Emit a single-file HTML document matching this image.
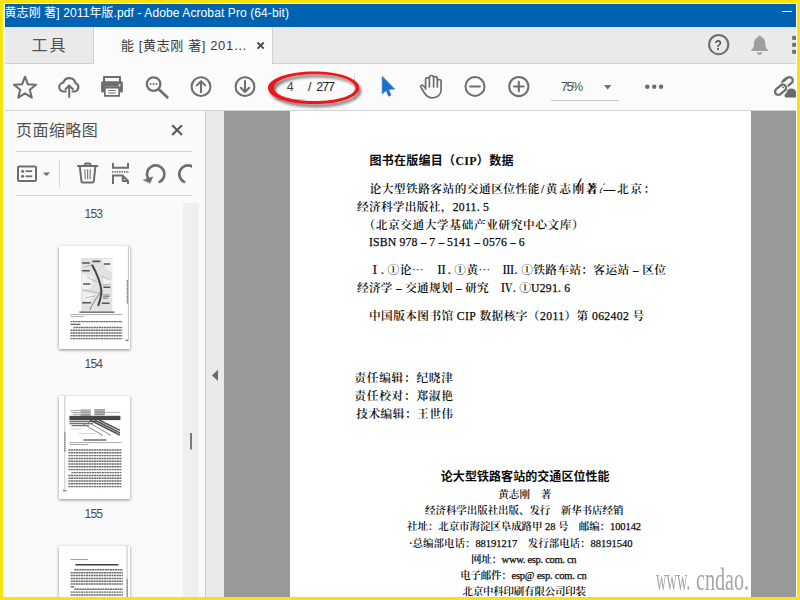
<!DOCTYPE html>
<html lang="zh-CN">
<head>
<meta charset="utf-8">
<title>Adobe Acrobat Pro</title>
<style>
*{box-sizing:border-box}
html,body{margin:0;padding:0}
body{width:800px;height:600px;overflow:hidden;background:#f8e310;position:relative;font-family:"Liberation Sans","Noto Sans CJK SC",sans-serif;color:#4b4b4b}
.abs,.app *{position:absolute}
.frame{position:absolute;left:3px;top:3px;width:794px;height:594px;background:#fff}
.app{position:absolute;left:5px;top:4px;width:791px;height:593px;background:#fafafa;overflow:hidden}
.title{left:0;top:0;width:791px;height:23px;background:#0063b1;color:#fff;font-size:12px;line-height:16px;white-space:pre}
.min{left:777px;top:7px;width:10px;height:1px;background:#fff}
.tabs{left:0;top:23px;width:791px;height:37px;background:#eaeaea;border-bottom:1px solid #d2d2d2}
.tab1{left:0;top:0;width:89px;height:37px;border-right:1px solid #cfcfcf;border-bottom:1px solid #cfcfcf;background:#eaeaea}
.tab2{left:89px;top:0;width:179px;height:37px;background:#fbfbfb;border-right:1px solid #d2d2d2}
.tool{left:0;top:60px;width:791px;height:47px;background:#fbfbfb;border-bottom:1px solid #d4d4d4}
.lp{left:0;top:107px;width:201px;height:486px;background:#fafafa;border-right:1px solid #cdcdcd;overflow:hidden}
.split{left:201px;top:107px;width:18px;height:486px;background:#eaeaea}
.doc{left:219px;top:107px;width:572px;height:486px;background:#999}
.page{left:66px;top:0;width:461px;height:486px;background:#fff}
svg{position:absolute;overflow:visible}
.ln{position:absolute;white-space:pre;line-height:20px;height:20px;color:#0a0a0a}
.ln.s{font-family:"Liberation Serif","Noto Serif CJK SC",serif;font-weight:600}
.ln.s .l{font-weight:400;position:static;-webkit-text-stroke:0.25px currentColor}
.wm{position:absolute;top:562.5px;font:400 30.5px/34px "Liberation Serif",serif;color:#a6a6a6;white-space:pre;transform-origin:0 0}
.ln b{font-weight:900;position:static}
.ln i{font-style:normal;font-family:"Noto Serif CJK SC",serif;position:static;line-height:0}
.ln.h{font-family:"Liberation Serif","Noto Sans CJK SC",sans-serif;font-weight:700}
.ln.n{font-family:"Liberation Sans","Noto Sans CJK SC",sans-serif;font-weight:400}
.ln.b{font-family:"Liberation Sans","Noto Sans CJK SC",sans-serif;font-weight:700}
#ptext{position:absolute;left:0;top:0;width:796px;height:597px;overflow:hidden}
#ov{position:absolute;left:0;top:0;width:796px;height:597px;overflow:hidden}
#thumbs{position:absolute;left:0;top:0;width:206px;height:597px;overflow:hidden}
#thumbs *{position:absolute}
.track{left:183px;top:203px;width:16px;height:394px;background:#efefef}
.thumb{left:58.6px;width:71px;height:103px;background:#fff;box-shadow:0 1px 3px rgba(0,0,0,.45);overflow:hidden}
</style>
</head>
<body>
<div class="frame"></div>
<div class="app">
  <div class="title"><div class="min"></div></div>
  <div class="tabs">
    <div class="tab1"></div>
    <div class="tab2"></div>
  </div>
  <div class="tool"></div>
  <div class="lp"></div>
  <div class="split"></div>
  <div class="doc"><div class="page"></div></div>
</div>
<div id="thumbs">
  <div class="track"></div>
<div class="thumb" style="top:246px"><svg width="71" height="103" viewBox="0 0 71 103" style="left:0;top:0" fill="none"><rect x="22.2" y="12" width="31.2" height="52.9" fill="#e2e2e2"/><path d="M43 13 L53 13 L53 26 L47 22 Z M23 28 L34 30 L32 42 L23 44 Z M44 30 L53 33 L53 39 L45 38 Z M24 46 L36 48 L30 56 L24 54 Z" fill="#f1f1f1"/><path d="M25 21 L33 19 M28 31 L38 36 M24 44 L40 47 M42 30 L52 34 M43 39 L52 38 M26 52 L36 50" stroke="#a4a4a4" stroke-width="0.7"/><path d="M42.4 44 C38 52 33 58 30.8 64" stroke="#7a7a7a" stroke-width="0.9"/><path d="M33 18.7 C36 24 41 34 42.4 44.5 C42.6 50 40.5 56 39.1 59.9" stroke="#454545" stroke-width="2"/><path d="M23.1 17 H30.8 M33.4 15.4 H41.3 M44.9 18 H51.2 M23.1 24.7 H30.8 M24.2 38 H31.4 M44.4 41.2 H51.2 M42.9 57.2 H50.6 M23.1 56.8 H31.9" stroke="#555" stroke-width="1.6"/><path d="M44 49 H50.6 M44 50.6 H50.6 M44 52.2 H49" stroke="#777" stroke-width="0.9"/><path d="M69.4 0 V93" stroke="#b4b4b4" stroke-width="0.8"/><path d="M68.3 34 V58" stroke="#6a6a6a" stroke-width="1.1" stroke-dasharray="1.4 0.6"/><path d="M20.4 66.2 H55.4" stroke="#4a4a4a" stroke-width="1.2"/><path d="M11.4 68.6 H63.4 M11.4 70.6 H25.4" stroke="#a0a0a0" stroke-width="0.9"/><path d="M11.4 75.6 H63.4" stroke="#6c6c6c" stroke-width="1.45" stroke-dasharray="2.1 0.45"/><path d="M11.4 78.4 H21.4" stroke="#6c6c6c" stroke-width="1.45"/><path d="M14.4 81.4 H63.4 M11.4 84.2 H63.4 M11.4 87.0 H63.4 M11.4 89.8 H63.4 M11.4 92.6 H63.4" stroke="#6c6c6c" stroke-width="1.45" stroke-dasharray="2.1 0.45"/><rect x="66.6" y="93.6" width="3" height="1.6" fill="#888"/></svg></div>
<div class="thumb" style="top:396px"><svg width="71" height="103" viewBox="0 0 71 103" style="left:0;top:0" fill="none"><path d="M11.5 14.6 H21 M12.5 16.5 H21 M14 18.3 H21" stroke="#a6a6a6" stroke-width="1"/><rect x="21.4" y="13.4" width="10.3" height="6.4" fill="#9c9c9c"/><rect x="35.4" y="13.2" width="10.5" height="6" fill="#8c8c8c"/><path d="M21.4 15 H31.7 M21.4 17.4 H31.7 M35.4 14.8 H45.9 M35.4 17.2 H45.9" stroke="#d8d8d8" stroke-width="0.7"/><path d="M46 16.4 H61" stroke="#9a9a9a" stroke-width="0.7"/><path d="M10.4 25.5 H37 M10.4 27.6 H34 M12.5 29.6 H30" stroke="#707070" stroke-width="1.3"/><path d="M31 24 L60.8 39 M35.5 24 L61 36.8 M40 24 L61 34.4" stroke="#505050" stroke-width="1.4"/><path d="M27 25 L52 39.4 M23.5 27.4 L44 39.6" stroke="#8a8a8a" stroke-width="1"/><path d="M12 33 H22 M20 37.6 H36" stroke="#bdbdbd" stroke-width="0.7"/><rect x="10.4" y="19.8" width="51" height="4.3" fill="#484848"/><path d="M5.8 0 V93" stroke="#b4b4b4" stroke-width="0.8"/><path d="M5.9 36 V56" stroke="#6a6a6a" stroke-width="1.1" stroke-dasharray="1.4 0.6"/><path d="M24.4 44 H47.4" stroke="#4a4a4a" stroke-width="1.2"/><path d="M10.4 46.6 H62.4 M10.4 48.5 H29.4" stroke="#a0a0a0" stroke-width="0.9"/><path d="M9.4 54.0 H62.4 M9.4 56.8 H62.4 M9.4 59.6 H62.4 M9.4 62.4 H62.4 M9.4 65.2 H62.4 M9.4 68.0 H62.4 M9.4 70.8 H62.4 M9.4 73.6 H62.4" stroke="#6c6c6c" stroke-width="1.45" stroke-dasharray="2.1 0.45"/><path d="M12.4 76.6 H62.4 M9.4 79.4 H62.4 M9.4 82.2 H62.4 M9.4 85.0 H62.4 M9.4 87.8 H62.4 M9.4 90.6 H62.4" stroke="#6c6c6c" stroke-width="1.45" stroke-dasharray="2.1 0.45"/><rect x="4" y="93.8" width="3.4" height="1.6" fill="#888"/></svg></div>
<div class="thumb" style="top:546px"><svg width="71" height="103" viewBox="0 0 71 103" style="left:0;top:0" fill="none"><path d="M68.1 0 V60" stroke="#b4b4b4" stroke-width="0.8"/><path d="M68.2 33 V60" stroke="#6a6a6a" stroke-width="1.1" stroke-dasharray="1.4 0.6"/><path d="M11.4 13.6 H29" stroke="#9a9a9a" stroke-width="1"/><path d="M16.4 18.8 H59.4" stroke="#3e3e3e" stroke-width="1.5"/><path d="M15.2 23.8 H63.9 M11.7 26.7 H63.9 M11.7 29.5 H63.9 M11.7 32.4 H63.9 M11.7 35.2 H63.9 M11.7 38.0 H63.9" stroke="#6c6c6c" stroke-width="1.45" stroke-dasharray="2.1 0.45"/><path d="M11.7 40.9 H15.2" stroke="#6c6c6c" stroke-width="1.45"/><path d="M15.2 43.2 H63.9 M11.7 46.1 H63.9 M11.7 48.9 H63.9" stroke="#6c6c6c" stroke-width="1.45" stroke-dasharray="2.1 0.45"/></svg></div>
</div>

<div id="ov"><svg id="ico" width="800" height="600" viewBox="0 0 800 600" style="left:0;top:0;position:absolute" fill="none" stroke="#6e6e6e" stroke-width="2.05" stroke-linecap="round" stroke-linejoin="round">
  <!-- star -->
  <polygon points="25.0,76.7 27.9,84.3 36.0,84.7 29.8,89.8 31.8,97.7 25.0,93.3 18.2,97.7 20.2,89.8 14.0,84.7 22.1,84.3"/>
  <!-- cloud upload -->
  <path d="M65.8 91.5 H63.8 A4.4 4.4 0 0 1 63.4 82.7 A6.2 6.2 0 0 1 75.4 83 A4.4 4.4 0 0 1 74.6 91.5 H72.6" stroke-width="2.2"/>
  <path d="M69.2 97 V85.4 M65.5 89.2 L69.2 85.4 L72.9 89.2" stroke-width="2"/>
  <!-- printer -->
  <g stroke="none" fill="#6e6e6e">
    <path d="M104 76 h16 a1 1 0 0 1 1 1 v5 h-2 v-4 h-14 v4 h-2 v-5 a1 1 0 0 1 1-1z"/>
    <path d="M102.7 81.3 h18.6 a1.6 1.6 0 0 1 1.6 1.6 v8 a1.6 1.6 0 0 1-1.6 1.6 h-1.3 v-5.7 h-16 v5.7 h-1.3 a1.6 1.6 0 0 1-1.6-1.6 v-8 a1.6 1.6 0 0 1 1.6-1.6z M119.6 84.2 a0.9 0.9 0 1 0 0.01 0z" fill-rule="evenodd"/>
    <path d="M104 86.8 h16 v9.9 h-16z M105.7 88.5 v6.5 h12.6 v-6.5z M108.4 90 h7.2 v0.9 h-7.2z M108.4 92.5 h7.2 v0.9 h-7.2z" fill-rule="evenodd"/>
  </g>
  <!-- search -->
  <circle cx="153.6" cy="84.1" r="6.8" stroke-width="2.3"/>
  <path d="M159 89.6 L167.3 97.3" stroke-width="2.7"/>
  <g stroke="none" fill="#6e6e6e"><circle cx="150.6" cy="84" r="0.95"/><circle cx="153.6" cy="84" r="0.95"/><circle cx="156.6" cy="84" r="0.95"/></g>
  <!-- up -->
  <circle cx="201" cy="86.7" r="9.4"/>
  <path d="M201 92.2 V81.2 M196.8 85.4 L201 81.2 L205.2 85.4"/>
  <!-- down -->
  <circle cx="245" cy="86.7" r="9.4"/>
  <path d="M245 81 V92 M240.8 87.8 L245 92 L249.2 87.8"/>
  <!-- separator -->
  <path d="M354.5 74 V100" stroke="#d9d9d9" stroke-width="1" stroke-linecap="butt"/>
  <!-- page number underline -->
  <path d="M276 99.5 H305" stroke="#c9c9c9" stroke-width="1" stroke-linecap="butt"/>
  <!-- red ellipse -->
  <defs><filter id="sh" x="-20%" y="-40%" width="140%" height="190%"><feGaussianBlur in="SourceAlpha" stdDeviation="1.7"/><feOffset dx="2.4" dy="2.6" result="o"/><feComponentTransfer><feFuncA type="linear" slope="0.55"/></feComponentTransfer><feMerge><feMergeNode/><feMergeNode in="SourceGraphic"/></feMerge></filter></defs>
  <path filter="url(#sh)" fill="#ee1219" stroke="none" fill-rule="evenodd" d="M268 88 C268 79 288 71.6 314 71.6 C340 71.6 359.3 79 359.3 88 C359.3 97 340 104.2 314 104.2 C288 104.2 268 97 268 88Z M273.8 87.8 C273.8 95.4 291 101.1 314.7 101.1 C338.4 101.1 355.6 95.4 355.6 87.8 C355.6 80.2 338.4 74.3 314.7 74.3 C291 74.3 273.8 80.2 273.8 87.8Z"/>
  <!-- pen scribble on page -->
  <path d="M577.4 187 C578.4 184 579.6 181.4 581 179" stroke="#111" stroke-width="1.3"/>
  <path d="M600.4 190.6 l1.6-2.6 M603.6 184.6 l1-0.8" stroke="#222" stroke-width="1"/>
  <!-- cursor -->
  <path d="M382.2 76.4 V94 L386.2 90.4 L388.6 96.2 L391 95.2 L388.7 89.5 L394.4 89 Z" fill="#1f6fcc" stroke="#1f6fcc" stroke-width="0.6"/>
  <!-- hand -->
  <path d="M425.6 89.2 V79.6 a1.9 1.9 0 0 1 3.8 0 V87 M429.4 79.6 V77.6 a2.1 2.1 0 0 1 4.2 0 V87 M433.6 78.4 a1.85 1.85 0 0 1 3.7 0 V87 M437.3 81.4 a1.9 1.9 0 0 1 3.8 0 V89.5 c0 5.2-3.6 8.4-8.6 8.4 c-4 0-6.4-2-8.4-5.4 l-3.3-5.2 c-.9-1.5 1-3 2.3-1.8 l2.5 2.7" stroke-width="1.7"/>
  <!-- minus -->
  <circle cx="475" cy="86.4" r="9.5"/>
  <path d="M470.2 86.4 H479.8"/>
  <!-- plus -->
  <circle cx="518.8" cy="86.5" r="9.6"/>
  <path d="M514 86.5 H523.6 M518.8 81.7 V91.3"/>
  <!-- zoom underline + triangle -->
  <path d="M551 100.5 H619" stroke="#c9c9c9" stroke-width="1" stroke-linecap="butt"/>
  <path d="M604 85 h7.4 l-3.7 4.4z" fill="#6e6e6e" stroke="none"/>
  <!-- dots -->
  <g stroke="none" fill="#6e6e6e"><circle cx="647.3" cy="86.8" r="2.2"/><circle cx="654.2" cy="86.8" r="2.2"/><circle cx="661.1" cy="86.8" r="2.2"/></g>
  <!-- link -->
  <g stroke-width="2.3">
    <g transform="translate(787.2 82.3) rotate(-40)"><rect x="-6.25" y="-3.25" width="12.5" height="6.5" rx="3.25"/></g>
    <g transform="translate(780.6 89.7) rotate(-40)"><rect x="-6.25" y="-3.25" width="12.5" height="6.5" rx="3.25" stroke="#fbfbfb" stroke-width="4"/><rect x="-6.25" y="-3.25" width="12.5" height="6.5" rx="3.25"/></g>
    <path d="M783.3 80.6 L786.6 77.9" />
  </g>
  <path d="M785.6 97.6 a2.6 2.6 0 0 1 0.8-4.6 a5 5 0 0 1 9.6-1.4 V97.6z" fill="#6a6a6a" stroke="#fbfbfb" stroke-width="1.2" paint-order="stroke"/>
  <!-- help -->
  <circle cx="718.7" cy="44.6" r="9.6"/>
  <!-- bell -->
  <g stroke="none" fill="#9e9e9e">
    <path d="M759.6 35.4 a1.4 1.4 0 0 1 1.4 1.5 c3 0.9 4.2 3.6 4.2 6.6 c0 3.6 1 5.2 2.8 6.6 v0.9 h-16.8 v-0.9 c1.8-1.4 2.8-3 2.8-6.6 c0-3 1.2-5.7 4.2-6.6 a1.4 1.4 0 0 1 1.4-1.5z"/>
    <path d="M757 52.4 h5.2 a2.6 2.3 0 0 1-5.2 0z"/>
  </g>
  <!-- grid squares -->
  <g stroke="none" fill="#6e6e6e"><rect x="792.2" y="35.9" width="4" height="4"/><rect x="792.2" y="42.8" width="4" height="4"/><rect x="792.2" y="49.8" width="4" height="4"/></g>
  <!-- tab close x -->
  <path d="M257.5 42.5 l6.2 6.2 M263.7 42.5 l-6.2 6.2" stroke="#4a4a4a" stroke-width="1.9" stroke-linecap="butt"/>

  <!-- LEFT PANEL -->
  <path d="M172.2 125.2 L182 135 M182 125.2 L172.2 135" stroke="#555" stroke-width="2" stroke-linecap="butt"/>
  <path d="M16 151.5 H192 M16 195.5 H192" stroke="#d3d3d3" stroke-width="1" stroke-linecap="butt"/>
  <path d="M59.5 159.5 V187" stroke="#d3d3d3" stroke-width="1" stroke-linecap="butt"/>
  <!-- options -->
  <rect x="18" y="166.4" width="18" height="14.6" rx="1.2" stroke-width="2"/>
  <g stroke="none" fill="#6e6e6e"><circle cx="22.6" cy="171.2" r="1.5"/><circle cx="22.6" cy="176.3" r="1.5"/><rect x="25.6" y="170.3" width="6.6" height="1.8"/><rect x="25.6" y="175.4" width="6.6" height="1.8"/></g>
  <path d="M43 172.4 h7 l-3.5 3.6z" fill="#6e6e6e" stroke="none"/>
  <!-- trash -->
  <path d="M77.9 165.9 H97.3 M84.9 165.4 V164.6 a1 1 0 0 1 1-1 h3.6 a1 1 0 0 1 1 1 V165.4" stroke-width="2"/>
  <path d="M79.8 166.4 l1.6 14.8 a1.5 1.5 0 0 0 1.5 1.3 h9.4 a1.5 1.5 0 0 0 1.5-1.3 l1.6-14.8" stroke-width="2"/>
  <path d="M84.9 169.3 l0.3 10 M87.6 169.3 v10 M90.3 169.3 l-0.3 10" stroke-width="1.2" stroke="#808080" stroke-linecap="butt"/>
  <!-- cut page -->
  <path d="M113 163 v4.7 h15 v-4.7" stroke-width="2" stroke-linecap="butt" stroke-linejoin="miter"/>
  <path d="M112 171.9 H129.2" stroke-width="1.8" stroke-dasharray="1.35 1.05" stroke-linecap="butt"/>
  <path d="M113 183.9 V175.6 H122.6 L128 181 V183.9 M122.8 176 V180.9 H127.6" stroke-width="2" stroke-linecap="butt" stroke-linejoin="miter"/>
  <!-- rotate ccw -->
  <path d="M147.95 178.05 A8.7 8.7 0 1 1 159.65 181.85" stroke-width="2.7"/>
  <path d="M143.8 180 L152.7 176.8 L150.1 183z" fill="#6e6e6e" stroke="#6e6e6e" stroke-width="0.6"/>
  <!-- rotate cw (clipped) -->
  <clipPath id="cp"><rect x="170" y="155" width="22" height="35"/></clipPath>
  <g clip-path="url(#cp)"><path d="M195.75 178.05 A8.7 8.7 0 1 0 184.05 181.85" stroke-width="2.7"/></g>
  <!-- splitter arrow -->
  <path d="M218 369.8 v11.2 l-6-5.6z" fill="#6a6a6a" stroke="none"/>
  <!-- scrollbar grip -->
  <path d="M191 433 V449.6" stroke="#787878" stroke-width="2" stroke-linecap="butt"/>
</svg>
</div>
<!-- page text, in absolute body coordinates -->
<div id="ptext">
<div class="ln h" style="left:369.5px;top:151.4px;font-size:12px;letter-spacing:0.27px;color:#0a0a0a;">图书在版编目（CIP）数据</div>
<div class="ln s" style="left:369.5px;top:179.6px;font-size:11.7px;letter-spacing:0.48px;color:#0a0a0a;">论大型铁路客站的交通区位性能</div>
<div class="ln s" style="left:541.0px;top:179.6px;font-size:11.7px;letter-spacing:1.61px;color:#0a0a0a;">/黄志刚<b>著</b><span class="l">.</span>—北京：</div>
<div class="ln s" style="left:357.0px;top:197.5px;font-size:11.7px;letter-spacing:0.27px;color:#0a0a0a;">经济科学出版社，<span class="l">2011. 5</span></div>
<div class="ln s" style="left:363.5px;top:215.9px;font-size:11.7px;letter-spacing:0.58px;color:#0a0a0a;">（北京交通大学基础产业研究中心文库）</div>
<div class="ln s" style="left:369.0px;top:232.9px;font-size:11.7px;letter-spacing:0.19px;color:#0a0a0a;"><span class="l">ISBN 978</span> – <span class="l">7</span> – <span class="l">5141</span> – <span class="l">0576</span> – <span class="l">6</span></div>
<div class="ln s" style="left:369.0px;top:260.9px;font-size:11.7px;letter-spacing:0.35px;color:#0a0a0a;">Ⅰ<span class="l">.</span> ①论<i>…</i>　Ⅱ<span class="l">.</span> ①黄<i>…</i>　Ⅲ<span class="l">.</span> ①铁路车站：客运站 – 区位</div>
<div class="ln s" style="left:357.0px;top:278.6px;font-size:11.7px;letter-spacing:0.23px;color:#0a0a0a;">经济学 – 交通规划 – 研究　Ⅳ<span class="l">.</span> ①<span class="l">U291. 6</span></div>
<div class="ln s" style="left:369.0px;top:306.6px;font-size:11.7px;letter-spacing:0.39px;color:#0a0a0a;">中国版本图书馆 <span class="l">CIP</span> 数据核字（<span class="l">2011</span>）第 <span class="l">062402</span> 号</div>
<div class="ln s" style="left:354.3px;top:369.4px;font-size:11.7px;letter-spacing:0.74px;color:#0a0a0a;">责任编辑：纪晓津</div>
<div class="ln s" style="left:354.3px;top:387.1px;font-size:11.7px;letter-spacing:0.74px;color:#0a0a0a;">责任校对：郑淑艳</div>
<div class="ln s" style="left:356.3px;top:405.2px;font-size:11.7px;letter-spacing:0.46px;color:#0a0a0a;">技术编辑：王世伟</div>
<div class="ln b" style="left:440.8px;top:466.8px;font-size:12px;letter-spacing:0.06px;color:#0a0a0a;">论大型铁路客站的交通区位性能</div>
<div class="ln s" style="left:498.2px;top:484.8px;font-size:10.5px;letter-spacing:0.12px;color:#0a0a0a;">黄志刚　著</div>
<div class="ln s" style="left:425.0px;top:500.8px;font-size:10.5px;letter-spacing:-0.06px;color:#0a0a0a;">经济科学出版社出版、发行　新华书店经销</div>
<div class="ln s" style="left:407.0px;top:517.2px;font-size:10.5px;letter-spacing:-0.08px;color:#0a0a0a;">社址：北京市海淀区阜成路甲 <span class="l">28</span> 号　邮编：<span class="l">100142</span></div>
<div class="ln s" style="left:409.0px;top:533.5px;font-size:10.5px;letter-spacing:-0.02px;color:#0a0a0a;">·总编部电话：<span class="l">88191217</span>　发行部电话：<span class="l">88191540</span></div>
<div class="ln s" style="left:471.0px;top:549.8px;font-size:10.5px;letter-spacing:-0.30px;color:#0a0a0a;">网址：<span class="l">www. esp. com. cn</span></div>
<div class="ln s" style="left:460.2px;top:566.2px;font-size:10.5px;letter-spacing:-0.23px;color:#0a0a0a;">电子邮件：<span class="l">esp@ esp. com. cn</span></div>
<div class="ln s" style="left:462.5px;top:582.0px;font-size:10.5px;letter-spacing:-0.23px;color:#0a0a0a;">北京中科印刷有限公司印装</div>
<div class="ln n" style="left:4.5px;top:3.3px;font-size:12px;letter-spacing:0.10px;color:#fff;">黄志刚 著] 2011年版.pdf - Adobe Acrobat Pro (64-bit)</div>
<div class="ln n" style="left:31.5px;top:35.5px;font-size:16px;letter-spacing:2.10px;color:#505050;">工具</div>
<div class="ln n" style="left:121.0px;top:36.0px;font-size:13px;letter-spacing:0.62px;color:#3a3a3a;">能 [黄志刚 著] 201…</div>
<div class="ln n" style="left:286.8px;top:76.9px;font-size:12.4px;letter-spacing:-0.80px;color:#444;">4</div>
<div class="ln n" style="left:307.9px;top:76.9px;font-size:12.4px;letter-spacing:1.10px;color:#222;">/</div>
<div class="ln n" style="left:316.2px;top:76.9px;font-size:12.4px;letter-spacing:-0.95px;color:#222;">277</div>
<div class="ln n" style="left:561.0px;top:77.0px;font-size:12.5px;letter-spacing:-1.40px;color:#4b4b4b;">75%</div>
<div class="ln b" style="left:714.4px;top:35.2px;font-size:14px;letter-spacing:-0.40px;color:#585858;transform:scaleX(.86)">?</div>
<div class="ln n" style="left:16.0px;top:121.0px;font-size:16px;letter-spacing:0.44px;color:#505050;">页面缩略图</div>
<div class="ln n" style="left:84.5px;top:204.0px;font-size:12px;letter-spacing:-0.75px;color:#4b4b4b;">153</div>
<div class="ln n" style="left:84.5px;top:354.0px;font-size:12px;letter-spacing:-0.75px;color:#4b4b4b;">154</div>
<div class="ln n" style="left:84.5px;top:504.0px;font-size:12px;letter-spacing:-0.75px;color:#4b4b4b;">155</div>

<div class="wm" style="left:655.6px;transform:scaleX(.474)">www.</div><div class="wm" style="left:696.4px;transform:scaleX(.659)">cndao.</div>
</div>
</body>
</html>
